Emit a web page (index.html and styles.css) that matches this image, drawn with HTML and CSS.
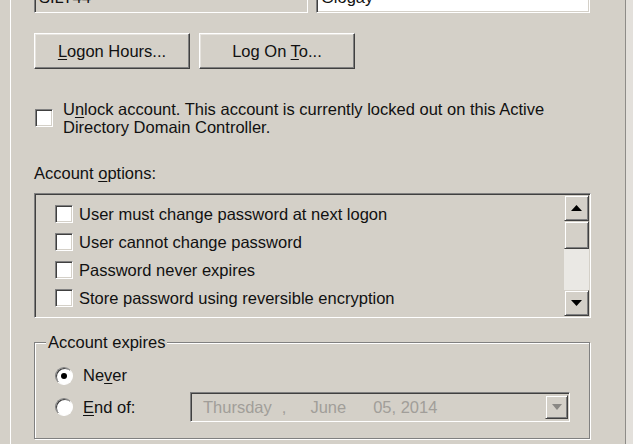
FILE: index.html
```html
<!DOCTYPE html>
<html lang="en">
<head>
<meta charset="utf-8">
<title>Account</title>
<link rel="stylesheet" href="styles.css">
</head>
<body>
<div class="page">
  <div class="fields">
    <div class="field field-disabled">SILT44</div>
    <div class="field">Glogay</div>
  </div>

  <div class="buttons">
    <button class="btn" type="button"><u>L</u>ogon Hours...</button>
    <button class="btn" type="button">Log On <u>T</u>o...</button>
  </div>

  <div class="unlock">
    <span class="check"></span>
    <div class="unlock-text">U<u>n</u>lock account. This account is currently locked out on this Active<br>Directory Domain Controller.</div>
  </div>

  <div class="label">Account <u>o</u>ptions:</div>

  <div class="listbox">
    <ul class="options">
      <li><span class="check"></span>User must change password at next logon</li>
      <li><span class="check"></span>User cannot change password</li>
      <li><span class="check"></span>Password never expires</li>
      <li><span class="check"></span>Store password using reversible encryption</li>
    </ul>
    <div class="scrollbar">
      <div class="sb-btn"><svg width="11" height="6" viewBox="0 0 11 6"><polygon points="0,6 5.5,0 11,6" fill="#000"/></svg></div>
      <div class="sb-thumb"></div>
      <div class="sb-track"></div>
      <div class="sb-btn"><svg width="11" height="6" viewBox="0 0 11 6"><polygon points="0,0 11,0 5.5,6" fill="#000"/></svg></div>
    </div>
  </div>

  <fieldset class="expires">
    <legend>Account expires</legend>
    <div class="radio-row never"><span class="radio checked"></span>Ne<u>v</u>er</div>
    <div class="radio-row end">
      <span class="radio"></span>
      <span class="end-label"><u>E</u>nd of:</span>
      <div class="datepicker">
        <span>Thursday</span><span class="dp-comma">,</span><span class="dp-month">June</span><span class="dp-day">05, 2014</span>
        <span class="dp-btn"><svg width="10" height="6" viewBox="0 0 10 6"><polygon points="0,0 10,0 5,6" fill="#8a8884"/></svg></span>
      </div>
    </div>
  </fieldset>
</div>
</body>
</html>
```

FILE: styles.css
```css
html, body {
  margin: 0;
  height: 444px;
  overflow: hidden;
}

body {
  background: linear-gradient(to right, #d4d0c8 626px, #e3e0db 626px);
  font-family: "Liberation Sans", Arial, sans-serif;
  font-size: 16.5px;
  color: #111;
}

u {
  text-underline-offset: 2px;
}

.page {
  display: flow-root;
  margin-left: 10px;
  width: 616px;
  height: 444px;
  box-sizing: border-box;
  border-left: 1px solid #fff;
  border-right: 1px solid #8e8c88;
  padding-left: 23px;
  background: #d4d0c8;
}

/* top text fields (cut off) */
.fields {
  display: flex;
  gap: 8px;
  width: 557px;
  margin-top: -14px;
}

.field {
  width: 274px;
  height: 27px;
  box-sizing: border-box;
  border: 1px solid;
  border-color: #808080 #fff #fff #808080;
  box-shadow: inset 1px 1px #404040, inset -1px -1px #d4d0c8;
  background: #fff;
  padding: 1px 4px 0;
  line-height: 19px;
  overflow: hidden;
  white-space: nowrap;
}

.field-disabled {
  background: #d4d0c8;
}

/* buttons */
.buttons {
  display: flex;
  gap: 9px;
  margin-top: 20px;
}

.btn {
  width: 156px;
  height: 36px;
  padding: 0;
  font: inherit;
  color: #111;
  background: #d4d0c8;
  border: 1px solid;
  border-color: #fff #404040 #404040 #fff;
  box-shadow: inset -1px -1px #808080, inset 1px 1px #e6e3de;
}

/* unlock */
.unlock {
  display: flex;
  align-items: center;
  margin-top: 31px;
  line-height: 18px;
}

.check {
  flex: none;
  width: 18px;
  height: 18px;
  box-sizing: border-box;
  border: 1px solid;
  border-color: #808080 #fff #fff #808080;
  box-shadow: inset 1px 1px #404040, inset -1px -1px #d4d0c8;
  background: #fff;
}

.unlock .check {
  margin-left: 1px;
  margin-right: 10px;
}

.label {
  margin-top: 28px;
  line-height: 19px;
}

/* list box */
.listbox {
  display: flex;
  width: 557px;
  height: 125px;
  margin-top: 10px;
  box-sizing: border-box;
  padding: 1px;
  border: 1px solid;
  border-color: #808080 #fff #fff #808080;
  box-shadow: inset 1px 1px #404040, inset -1px -1px #d4d0c8;
}

.options {
  flex: 1;
  list-style: none;
  margin: 0;
  padding: 5px 0 0 19px;
}

.options li {
  display: flex;
  align-items: center;
  gap: 6px;
  height: 28px;
  white-space: nowrap;
}

.scrollbar {
  display: flex;
  flex-direction: column;
  width: 25px;
}

.sb-btn,
.sb-thumb,
.dp-btn {
  box-sizing: border-box;
  background: #d4d0c8;
  border: 1px solid;
  border-color: #d4d0c8 #404040 #404040 #d4d0c8;
  box-shadow: inset 1px 1px #fff, inset -1px -1px #808080;
}

.sb-btn {
  height: 26px;
  display: flex;
  align-items: center;
  justify-content: center;
}

.sb-thumb {
  height: 28px;
}

.sb-track {
  flex: 1;
  background: #eae8e4;
}

/* account expires group */
.expires {
  width: 556px;
  min-width: 0;
  box-sizing: border-box;
  margin: 15px 0 0;
  padding: 0 0 16px 20px;
  border: 1px solid #808080;
  box-shadow: inset 1px 1px #fff, 1px 1px #fff;
}

.expires legend {
  margin-left: -9px;
  padding: 0 2px;
  line-height: 19px;
  background: #d4d0c8;
}

.radio-row {
  display: flex;
  align-items: center;
}

.never {
  margin-top: 14px;
  height: 19px;
}

.end {
  margin-top: 7px;
}

.radio {
  flex: none;
  width: 18px;
  height: 18px;
  box-sizing: border-box;
  margin-right: 10px;
  border-radius: 50%;
  border: 1px solid;
  border-color: #808080 #fff #fff #808080;
  box-shadow: inset 1px 1px #404040;
  background: #fff;
  display: grid;
  place-items: center;
}

.radio.checked::after {
  content: "";
  width: 6px;
  height: 6px;
  border-radius: 50%;
  background: #000;
}

.end-label {
  width: 107px;
}

.datepicker {
  display: flex;
  align-items: center;
  width: 380px;
  height: 30px;
  box-sizing: border-box;
  padding: 0 1px 0 12px;
  border: 1px solid;
  border-color: #808080 #fff #fff #808080;
  box-shadow: inset 1px 1px #404040, inset -1px -1px #d4d0c8;
  color: #a19e99;
  white-space: nowrap;
}

.dp-comma {
  margin-left: 10px;
}

.dp-month {
  margin-left: 24px;
}

.dp-day {
  margin-left: 27px;
}

.dp-btn {
  margin-left: auto;
  width: 23px;
  height: 24px;
  display: flex;
  align-items: center;
  justify-content: center;
}
```
